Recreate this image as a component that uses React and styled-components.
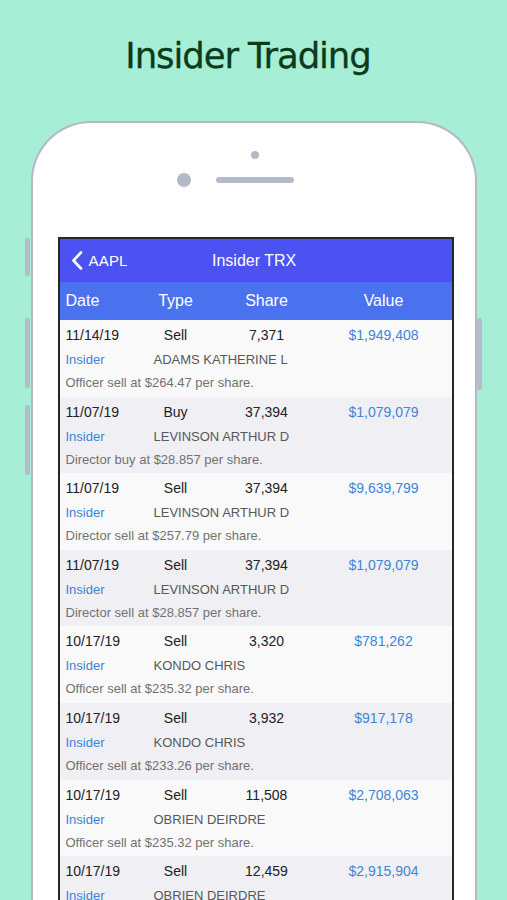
import React from "react";
import styled, { createGlobalStyle } from "styled-components";

const GlobalStyle = createGlobalStyle`
  html, body {
    margin: 0;
    padding: 0;
    background: #a7eed6;
  }
  * {
    box-sizing: border-box;
  }
`;

const Page = styled.div`
  width: 507px;
  height: 900px;
  overflow: hidden;
  background: #a7eed6;
  font-family: "Liberation Sans", Arial, sans-serif;
`;

const TitleBar = styled.div`
  height: 121px;
  display: flex;
  align-items: center;
  justify-content: center;
  padding: 0 11px 9px 0;
`;

const Title = styled.h1`
  margin: 0;
  font-family: "DejaVu Sans", sans-serif;
  font-weight: normal;
  font-size: 35.5px;
  letter-spacing: -1.1px;
  line-height: 1;
  color: #0b3b18;
  -webkit-text-stroke: 0.3px #0b3b18;
`;

const Phone = styled.div`
  position: relative;
  margin-left: 31px;
  width: 446px;
  height: 900px;
  background: #fff;
  border: 2px solid #b4b9c6;
  border-bottom: none;
  border-radius: 60px 60px 0 0;
  display: flex;
  flex-direction: column;
  align-items: center;
`;

const SideButton = styled.div`
  position: absolute;
  width: 5px;
  top: ${p => p.top}px;
  height: ${p => p.len}px;
  ${p => (p.right ? "right: -7px;" : "left: -8px;")}
  background: #b8bcc9;
  border-radius: 2px;
`;

const SpeakerDot = styled.div`
  margin-top: 28px;
  width: 8px;
  height: 8px;
  border-radius: 50%;
  background: #b3b9c7;
  margin-left: 2px;
`;

const SensorRow = styled.div`
  margin-top: 14px;
  display: flex;
  align-items: center;
  gap: 25px;
  margin-left: 2px;
`;

const Camera = styled.div`
  width: 14px;
  height: 14px;
  border-radius: 50%;
  background: ${p => (p.ghost ? "transparent" : "#b3b9c7")};
`;

const Speaker = styled.div`
  width: 78px;
  height: 6px;
  border-radius: 3px;
  background: #b3b9c7;
`;

const Screen = styled.div`
  margin-top: 50px;
  margin-left: 3px;
  width: 396px;
  flex: 1;
  border: 2px solid #262626;
  border-bottom: none;
  background: #f9f9fa;
  display: flex;
  flex-direction: column;
`;

const NavBar = styled.div`
  height: 43px;
  background: #4b52f1;
  color: #fff;
  display: flex;
  align-items: center;
  font-size: 16px;
`;

const BackButton = styled.div`
  display: flex;
  align-items: center;
  gap: 6px;
  padding-left: 11px;
  font-size: 15px;
  letter-spacing: 0.2px;
`;

const NavTitle = styled.div`
  flex: 1;
  text-align: center;
  margin-right: 71px;
`;

const ColumnGrid = styled.div`
  display: grid;
  grid-template-columns: 75px 70px 112px 122px;
  padding: 0 7px 0 6px;
  align-items: center;
`;

const HeaderRow = styled(ColumnGrid)`
  height: 38px;
  background: #4a72ef;
  color: #fff;
  font-size: 16px;
`;

const Cell = styled.div`
  text-align: ${p => p.align || "center"};
  white-space: nowrap;
  color: ${p => p.color || "inherit"};
`;

const TradeRow = styled.div`
  height: 76.6px;
  flex-shrink: 0;
  padding-top: 4px;
  background: ${p => (p.shade ? "#efeff4" : "#f9f9fa")};
`;

const MainLine = styled(ColumnGrid)`
  height: 22px;
  font-size: 14px;
  color: #222;
`;

const PersonLine = styled.div`
  height: 27px;
  display: flex;
  align-items: center;
  padding-left: 6px;
  font-size: 13px;
`;

const InsiderTag = styled.span`
  width: 88px;
  color: #3a83d8;
`;

const PersonName = styled.span`
  color: #585858;
`;

const Note = styled.div`
  height: 20px;
  line-height: 20px;
  padding-left: 6px;
  font-size: 13px;
  color: #727272;
`;

const trades = [
  ["11/14/19", "Sell", "7,371", "$1,949,408", "ADAMS KATHERINE L", "Officer sell at $264.47 per share."],
  ["11/07/19", "Buy", "37,394", "$1,079,079", "LEVINSON ARTHUR D", "Director buy at $28.857 per share."],
  ["11/07/19", "Sell", "37,394", "$9,639,799", "LEVINSON ARTHUR D", "Director sell at $257.79 per share."],
  ["11/07/19", "Sell", "37,394", "$1,079,079", "LEVINSON ARTHUR D", "Director sell at $28.857 per share."],
  ["10/17/19", "Sell", "3,320", "$781,262", "KONDO CHRIS", "Officer sell at $235.32 per share."],
  ["10/17/19", "Sell", "3,932", "$917,178", "KONDO CHRIS", "Officer sell at $233.26 per share."],
  ["10/17/19", "Sell", "11,508", "$2,708,063", "OBRIEN DEIRDRE", "Officer sell at $235.32 per share."],
  ["10/17/19", "Sell", "12,459", "$2,915,904", "OBRIEN DEIRDRE", "Officer sell at $235.32 per share."],
];

const Chevron = () => (
  <svg width="12" height="19" viewBox="0 0 12 19">
    <path d="M10 1.5 L2.5 9.5 L10 17.5" fill="none" stroke="#fff" strokeWidth="2.6" strokeLinecap="round" strokeLinejoin="round" />
  </svg>
);

export default function App() {
  return (
    <Page>
      <GlobalStyle />
      <TitleBar>
        <Title>Insider Trading</Title>
      </TitleBar>
      <Phone>
        <SideButton top={115} len={38} />
        <SideButton top={195} len={70} />
        <SideButton top={282} len={70} />
        <SideButton right top={195} len={72} />
        <SpeakerDot />
        <SensorRow>
          <Camera />
          <Speaker />
          <Camera ghost />
        </SensorRow>
        <Screen>
          <NavBar>
            <BackButton>
              <Chevron />
              AAPL
            </BackButton>
            <NavTitle>Insider TRX</NavTitle>
          </NavBar>
          <HeaderRow>
            <Cell align="left">Date</Cell>
            <Cell>Type</Cell>
            <Cell>Share</Cell>
            <Cell>Value</Cell>
          </HeaderRow>
          {trades.map(([date, type, share, value, name, note], i) => (
            <TradeRow key={i} shade={i % 2 === 1}>
              <MainLine>
                <Cell align="left">{date}</Cell>
                <Cell>{type}</Cell>
                <Cell>{share}</Cell>
                <Cell color="#3d86d8">{value}</Cell>
              </MainLine>
              <PersonLine>
                <InsiderTag>Insider</InsiderTag>
                <PersonName>{name}</PersonName>
              </PersonLine>
              <Note>{note}</Note>
            </TradeRow>
          ))}
        </Screen>
      </Phone>
    </Page>
  );
}
